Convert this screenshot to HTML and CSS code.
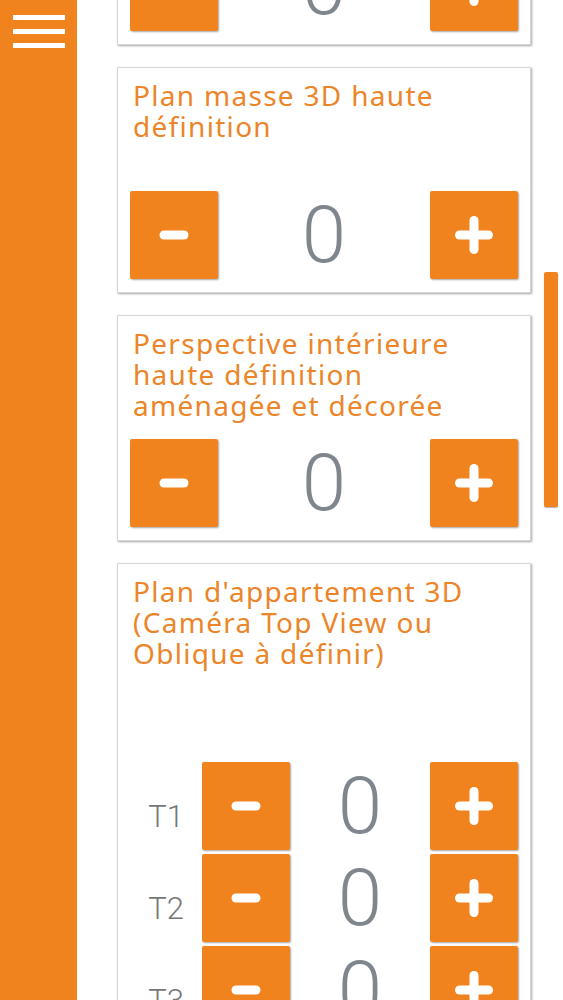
FILE: index.html
```html
<!DOCTYPE html>
<html lang="fr">
<head>
    <meta charset="UTF-8">
    <meta name="viewport" content="width=device-width, initial-scale=1.0">
    <title>Devis 3D</title>
    <link rel="stylesheet" href="styles.css">
</head>
<body>

    <div class="app">
        <!-- Side menu -->
        <nav class="sidebar">
            <button class="menu-btn" aria-label="Menu">
                <span></span>
                <span></span>
                <span></span>
            </button>
        </nav>

        <!-- Product list -->
        <main class="list">

            <section class="card">
                <h3 class="card-title">Perspective extérieure haute définition</h3>
                <div class="stepper">
                    <button class="step-btn"><svg viewBox="0 0 38 38"><line x1="9" y1="19" x2="29" y2="19"/></svg></button>
                    <span class="count">0</span>
                    <button class="step-btn"><svg viewBox="0 0 38 38"><line x1="4.5" y1="19" x2="33.5" y2="19"/><line x1="19" y1="4.5" x2="19" y2="33.5"/></svg></button>
                </div>
            </section>

            <section class="card">
                <h3 class="card-title">Plan masse 3D haute définition</h3>
                <div class="stepper">
                    <button class="step-btn"><svg viewBox="0 0 38 38"><line x1="9" y1="19" x2="29" y2="19"/></svg></button>
                    <span class="count">0</span>
                    <button class="step-btn"><svg viewBox="0 0 38 38"><line x1="4.5" y1="19" x2="33.5" y2="19"/><line x1="19" y1="4.5" x2="19" y2="33.5"/></svg></button>
                </div>
            </section>

            <section class="card">
                <h3 class="card-title">Perspective intérieure haute définition aménagée et décorée</h3>
                <div class="stepper">
                    <button class="step-btn"><svg viewBox="0 0 38 38"><line x1="9" y1="19" x2="29" y2="19"/></svg></button>
                    <span class="count">0</span>
                    <button class="step-btn"><svg viewBox="0 0 38 38"><line x1="4.5" y1="19" x2="33.5" y2="19"/><line x1="19" y1="4.5" x2="19" y2="33.5"/></svg></button>
                </div>
            </section>

            <section class="card">
                <h3 class="card-title">Plan d'appartement 3D (Caméra Top View ou Oblique à définir)</h3>
                <div class="variants">
                    <div class="stepper">
                        <span class="variant">T1</span>
                        <button class="step-btn"><svg viewBox="0 0 38 38"><line x1="9" y1="19" x2="29" y2="19"/></svg></button>
                        <span class="count">0</span>
                        <button class="step-btn"><svg viewBox="0 0 38 38"><line x1="4.5" y1="19" x2="33.5" y2="19"/><line x1="19" y1="4.5" x2="19" y2="33.5"/></svg></button>
                    </div>
                    <div class="stepper">
                        <span class="variant">T2</span>
                        <button class="step-btn"><svg viewBox="0 0 38 38"><line x1="9" y1="19" x2="29" y2="19"/></svg></button>
                        <span class="count">0</span>
                        <button class="step-btn"><svg viewBox="0 0 38 38"><line x1="4.5" y1="19" x2="33.5" y2="19"/><line x1="19" y1="4.5" x2="19" y2="33.5"/></svg></button>
                    </div>
                    <div class="stepper">
                        <span class="variant">T3</span>
                        <button class="step-btn"><svg viewBox="0 0 38 38"><line x1="9" y1="19" x2="29" y2="19"/></svg></button>
                        <span class="count">0</span>
                        <button class="step-btn"><svg viewBox="0 0 38 38"><line x1="4.5" y1="19" x2="33.5" y2="19"/><line x1="19" y1="4.5" x2="19" y2="33.5"/></svg></button>
                    </div>
                </div>
            </section>

        </main>

        <div class="scroll-thumb"></div>
    </div>

</body>
</html>
```

FILE: styles.css
```css
body, html {
    margin: 0;
    padding: 0;
    height: 100%;
    font-family: "Noto Sans", Lato, sans-serif;
    background-color: #fff;
}
.app {
    display: flex;
    height: 100vh;
    overflow: hidden;
    position: relative;
}

/* side menu */
.sidebar {
    flex: 0 0 77px;
    background-color: #f0831e;
}
.menu-btn {
    display: flex;
    flex-direction: column;
    gap: 9px;
    margin: 15px 0 0 13px;
    padding: 0;
    border: none;
    background: none;
}
.menu-btn span {
    display: block;
    width: 52px;
    height: 5px;
    background-color: #fff;
}

/* list of products, scrolled part way down */
.list {
    display: flex;
    flex-direction: column;
    gap: 22px;
    width: 414px;
    margin: -181px 0 0 40px;
}
.card {
    display: flex;
    flex-direction: column;
    box-sizing: border-box;
    border: 1px solid #d6d6d6;
    box-shadow: 1px 1px 2px rgba(0, 0, 0, 0.35);
    background-color: #fff;
    padding: 12px 12px 13px 12px;
}
.card-title {
    margin: 0 0 18px 0;
    min-height: 93px;
    padding: 0 14px 0 3px;
    font-size: 28px;
    line-height: 31px;
    font-weight: 400;
    letter-spacing: 1.3px;
    color: #ec8529;
}
.variants {
    display: flex;
    flex-direction: column;
    gap: 4px;
    margin-top: 75px;
}

.stepper {
    display: flex;
    align-items: center;
    justify-content: space-between;
}
.step-btn {
    display: flex;
    align-items: center;
    justify-content: center;
    width: 88px;
    height: 88px;
    padding: 0;
    border: none;
    border-radius: 2px;
    background-color: #f0831e;
    box-shadow: 1px 1px 2px rgba(0, 0, 0, 0.35);
}
.step-btn svg {
    width: 38px;
    height: 38px;
    stroke: #fff;
    stroke-width: 9;
    stroke-linecap: round;
}
.count {
    flex: 1;
    text-align: center;
    font-family: Roboto, sans-serif;
    font-weight: 300;
    font-size: 80px;
    line-height: 88px;
    color: #80868e;
}
.variant {
    width: 72px;
    text-align: center;
    font-family: Roboto, sans-serif;
    font-weight: 300;
    font-size: 31px;
    color: #777;
    padding-top: 20px;
}

/* overlay scroll indicator */
.scroll-thumb {
    position: absolute;
    left: 544px;
    top: 272px;
    width: 14px;
    height: 235px;
    border-radius: 2px;
    background-color: #f0831e;
    box-shadow: 0 1px 1px rgba(0, 0, 0, 0.3);
}
```
